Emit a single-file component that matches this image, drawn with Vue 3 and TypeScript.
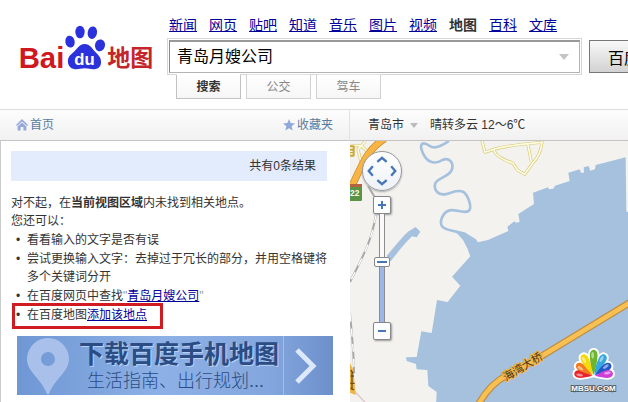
<script setup lang="ts">
import { computed, ref } from 'vue'

interface NavLink {
  label: string
  current?: boolean
}

const links: NavLink[] = [
  { label: '新闻' },
  { label: '网页' },
  { label: '贴吧' },
  { label: '知道' },
  { label: '音乐' },
  { label: '图片' },
  { label: '视频' },
  { label: '地图', current: true },
  { label: '百科' },
  { label: '文库' },
]

const tabs: string[] = ['搜索', '公交', '驾车']
const activeTab = ref('搜索')
const keyword = ref('青岛月嫂公司')
const zoom = ref(56)

const trackStyle = computed(() => ({ '--level': `${zoom.value}%` }))

function petalPath(length: number): string {
  return `M0 -4 C-9 -26 -13 ${20 - length} -11 ${12 - length} C-8 ${-2 - length} 8 ${-2 - length} 11 ${12 - length} C13 ${20 - length} 9 -26 0 -4Z`
}

const petals = [
  { angle: -82, length: 60, color: '#e8232b' },
  { angle: -56, length: 64, color: '#f47a20' },
  { angle: -28, length: 74, color: '#f5d90a' },
  { angle: 0, length: 80, color: '#6db52c' },
  { angle: 28, length: 74, color: '#35a8e0' },
  { angle: 56, length: 64, color: '#2458c8' },
  { angle: 82, length: 60, color: '#cf3fd8' },
].map((petal) => ({ ...petal, path: petalPath(petal.length) }))

function changeZoom(step: number) {
  zoom.value = Math.min(100, Math.max(0, zoom.value + step))
}
</script>

<template>
  <div class="page">
    <header class="header">
      <a class="logo" href="#" aria-label="Baidu 地图">
        <svg viewBox="57 72 405 138" width="135" height="46">
          <text class="logo-red" x="56" y="203" font-size="88">Bai</text>
          <g fill="#2b32dc">
            <ellipse cx="210" cy="125" rx="14" ry="18" transform="rotate(-12 210 125)" />
            <ellipse cx="240" cy="96" rx="14" ry="19" />
            <ellipse cx="277" cy="98" rx="14" ry="19" transform="rotate(12 277 98)" />
            <ellipse cx="300" cy="136" rx="15" ry="18" transform="rotate(14 300 136)" />
            <path d="M254 132 C238 132 232 146 222 155 C210 165 202 172 204 188 C207 206 224 210 240 206 C250 204 260 204 268 206 C286 210 302 206 303 188 C304 172 294 164 284 154 C275 144 270 132 254 132Z" />
          </g>
          <text class="logo-du" x="223" y="194" font-size="50">du</text>
          <text class="logo-map" x="322" y="198" font-size="69">地图</text>
        </svg>
      </a>
      <div class="search">
        <nav class="links">
          <template v-for="link in links" :key="link.label">
            <strong v-if="link.current">{{ link.label }}</strong>
            <a v-else href="#">{{ link.label }}</a>
          </template>
        </nav>
        <form class="search-row" @submit.prevent>
          <div class="box">
            <input v-model="keyword" type="text" aria-label="搜索" />
            <span class="caret"></span>
          </div>
          <button class="submit" type="submit">百度</button>
        </form>
        <div class="tabs">
          <button
            v-for="tab in tabs"
            :key="tab"
            type="button"
            :class="['tab', { active: tab === activeTab }]"
            @click="activeTab = tab"
          >{{ tab }}</button>
        </div>
      </div>
    </header>

    <div class="columns">
      <aside class="side">
        <div class="bar side-bar">
          <a href="#">
            <svg width="12" height="12" viewBox="0 0 12 12" fill="#94a9da">
              <path d="M6 0 L12 6 L11 7 L6 2.4 L1 7 L0 6Z" />
              <path d="M6 3.4 L10.4 7.4 V11.6 H7.4 V8 H4.6 V11.6 H1.6 V7.4Z" />
            </svg>
            首页
          </a>
          <a href="#">
            <svg width="12" height="12" viewBox="0 0 12 12" fill="#8fa8dc">
              <path d="M6 0 L7.6 4.1 L12 4.4 L8.6 7.2 L9.7 11.6 L6 9.2 L2.3 11.6 L3.4 7.2 L0 4.4 L4.4 4.1Z" />
            </svg>
            收藏夹
          </a>
        </div>
        <div class="results">
          <div class="count">共有0条结果</div>
          <p>对不起，在<b>当前视图区域</b>内未找到相关地点。</p>
          <p>您还可以：</p>
          <ul>
            <li>看看输入的文字是否有误</li>
            <li>尝试更换输入文字：去掉过于冗长的部分，并用空格键将多个关键词分开</li>
            <li>在百度网页中查找<i>"</i><a href="#">青岛月嫂公司</a><i>"</i></li>
            <li><span class="marked">在百度地图<a href="#">添加该地点</a></span></li>
          </ul>
          <a class="banner" href="#">
            <svg class="pin" width="42" height="56" viewBox="0 0 42 56">
              <path fill="#a9c1ea" fill-rule="evenodd" d="M21 0 A21 21 0 0 1 42 21 C42 34 28 40 22 56 H20 C14 40 0 34 0 21 A21 21 0 0 1 21 0Z M21 14 A7 7 0 1 0 21 28 A7 7 0 1 0 21 14Z" />
            </svg>
            <span class="copy">
              <span class="title">下载百度手机地图</span>
              <span class="sub">生活指南、出行规划...</span>
            </span>
            <span class="go">
              <svg width="22" height="36" viewBox="0 0 22 36">
                <path d="M2 2 L18 18 L2 34" fill="none" stroke="#dce8fb" stroke-width="5" />
              </svg>
            </span>
          </a>
        </div>
      </aside>

      <main class="main">
        <div class="bar map-bar">
          <button type="button" class="city">青岛市<span class="caret small"></span></button>
          <span>晴转多云 12～6℃</span>
        </div>
        <div class="map">
          <svg class="canvas" viewBox="6 3 834 783" preserveAspectRatio="xMinYMin slice">
            <rect x="0" y="0" width="900" height="900" fill="#f3f2ef" />
            <g fill="#a5c1de">
              <path d="M833 52 L743 75 L741 88 L727 92 L722 78 L707 82 L708 98 L699 98 L695 88 L661 98 L665 123 L621 137 L616 146 L603 148 L600 142 L555 158 L558 192 L511 222 L515 246 L503 248 L499 244 L478 260 L481 273 L420 300 L390 307 L384 298 L350 277 L318 270 L345 300 L358 325 L367 349 L312 410 L337 437 L299 486 L267 480 L251 579 L220 574 L206 651 L174 652 L176 663 L204 672 L206 688 L238 690 L241 738 L266 756 L264 800 H900 V215 H835Z" />
              <path d="M116 348 C140 320 160 293 182 274 L203 261 L217 275 L206 292 L192 289 C170 310 150 336 128 364Z" />
            </g>
            <path d="M300 5 C280 18 265 26 252 21 C238 16 236 9 226 10 C212 13 223 40 232 52 C248 72 268 70 283 60 C305 50 320 70 310 92 C300 112 270 112 262 130 C255 150 272 165 290 163 C315 158 325 148 345 155 C362 166 373 205 362 213 C345 222 325 207 305 211 C285 216 272 245 283 260 C295 274 325 270 350 285" fill="none" stroke="#a5c1de" stroke-width="8" stroke-linecap="round" />

            <g fill="none" stroke-linejoin="round">
              <g stroke="#d5c978" stroke-width="9">
                <path d="M401 0 L411 37 L440 27 C490 14 540 11 583 7 M583 0 C580 30 572 52 555 68 L530 103 L508 90 L495 70 C470 60 440 48 438 28 M539 10 L550 66" />
                <path d="M8 17 H40 L60 36 M52 4 L30 28 L40 70" />
              </g>
              <g stroke="#fffce0" stroke-width="5">
                <path d="M401 0 L411 37 L440 27 C490 14 540 11 583 7 M583 0 C580 30 572 52 555 68 L530 103 L508 90 L495 70 C470 60 440 48 438 28 M539 10 L550 66" />
                <path d="M8 17 H40 L60 36 M52 4 L30 28 L40 70" />
              </g>
              <path d="M110 -4 C60 28 48 60 10 142" stroke="#d08e35" stroke-width="22" />
              <path d="M110 -4 C60 28 48 60 10 142" stroke="#f9b544" stroke-width="17" />
              <path d="M60 138 L84 178 M84 225 C70 300 55 330 6 426 M6 520 C12 590 18 640 18 700" stroke="#a8a8a8" stroke-width="6" />
              <path d="M84 225 C70 300 55 330 6 426 M6 520 C12 590 18 640 18 700" stroke="#ffffff" stroke-width="4" stroke-dasharray="24 22" />
              <path d="M390 795 C418 746 445 722 475 707 L590 643 L850 485" stroke="#bc8c42" stroke-width="21" />
              <path d="M390 795 C418 746 445 722 475 707 L590 643 L850 485" stroke="#f8c052" stroke-width="14" />
              <path d="M18 752 L54 790" stroke="#dfc5cd" stroke-width="4" />
            </g>
            <rect x="0" y="16" width="20" height="34" rx="4" fill="#c9a73c" />
            <path d="M6 24 H14 M6 34 H14 M6 42 H14" stroke="#fff8dc" stroke-width="4" />
            <rect x="0" y="132" width="42" height="51" rx="4" fill="#579545" />
            <rect x="0" y="132" width="42" height="9" fill="#b4633c" />
            <text class="road-no" x="6" y="169">22</text>
            <path d="M6 668 L16 690 L23 765 L6 758Z" fill="#efb746" />
            <path d="M8 690 L16 700 M8 708 H18 M12 696 V750 M7 730 H20 M8 744 L18 750" fill="none" stroke="#6e501e" stroke-width="4" />
            <text class="bridge" transform="translate(474 724) rotate(-31)">海湾大桥</text>

            <g transform="translate(737 708)">
              <g fill="#fff" stroke="#fff" stroke-width="11" stroke-linejoin="round">
                <path v-for="p in petals" :key="p.angle" :transform="`rotate(${p.angle})`" :d="p.path" />
              </g>
              <g v-for="p in petals" :key="p.color" :transform="`rotate(${p.angle})`">
                <path :d="p.path" :fill="p.color" />
                <ellipse cx="-3" :cy="18 - p.length" rx="4" ry="10" fill="#fff" opacity=".5" />
              </g>
            </g>
            <text class="mark" x="670" y="753">MBSU.COM</text>
          </svg>

          <div class="pan">
            <button type="button" class="up" aria-label="上"><svg viewBox="0 0 10 6"><path d="M1 5 L5 1.5 L9 5" /></svg></button>
            <button type="button" class="left" aria-label="左"><svg viewBox="0 0 10 6"><path d="M1 5 L5 1.5 L9 5" /></svg></button>
            <button type="button" class="right" aria-label="右"><svg viewBox="0 0 10 6"><path d="M1 5 L5 1.5 L9 5" /></svg></button>
            <button type="button" class="down" aria-label="下"><svg viewBox="0 0 10 6"><path d="M1 5 L5 1.5 L9 5" /></svg></button>
          </div>
          <div class="zoom">
            <button type="button" aria-label="放大" @click="changeZoom(5)">
              <svg width="8" height="8" viewBox="0 0 8 8"><path d="M0 4 H8 M4 0 V8" /></svg>
            </button>
            <input v-model.number="zoom" type="range" min="0" max="100" aria-label="缩放" :style="trackStyle" />
            <button type="button" aria-label="缩小" @click="changeZoom(-5)">
              <svg width="8" height="8" viewBox="0 0 8 8"><path d="M0 4 H8" /></svg>
            </button>
          </div>
        </div>
      </main>
    </div>
  </div>
</template>

<style>
body {
  margin: 0;
  background: #fff;
}
</style>

<style scoped>
.page {
  display: flex;
  flex-direction: column;
  min-height: 100vh;
  overflow: hidden;
  font: 12px/18px "Liberation Sans", "Noto Sans CJK SC", sans-serif;
  color: #333;
}
button,
input {
  box-sizing: border-box;
  margin: 0;
  padding: 0;
  font-family: inherit;
}
.header {
  display: flex;
  box-sizing: border-box;
  height: 109px;
  padding: 15px 0 0 19px;
}
.logo {
  flex: none;
  width: 148px;
  padding-top: 9px;
}
.logo svg,
.canvas,
.pan svg,
.zoom svg,
.bar svg,
.banner svg {
  display: block;
}
.logo svg {
  overflow: visible;
}
.logo text {
  font-family: "Liberation Sans", sans-serif;
  font-weight: bold;
}
.logo-red {
  fill: #d01820;
}
.logo-du {
  fill: #fff;
}
.logo .logo-map {
  fill: #c4252b;
  font-family: "Noto Sans CJK SC", sans-serif;
}
.search {
  flex: 1;
  min-width: 0;
}
.links {
  display: flex;
  gap: 12px;
  padding-left: 2px;
  font-size: 14px;
  line-height: 20px;
}
a {
  color: #00009a;
}
.search-row {
  display: flex;
  align-items: center;
  gap: 9px;
  margin-top: 5px;
}
.box {
  display: flex;
  flex: 1 0 411px;
  max-width: 411px;
  align-items: center;
  box-sizing: border-box;
  height: 33px;
  margin-left: 2px;
  border: 1px solid #b4b4b4;
  border-top: 2px solid #999;
  border-left-color: #888;
  outline: 1px solid #d6d6d6;
  outline-offset: 1px;
}
.box input {
  flex: 1;
  min-width: 0;
  height: 26px;
  padding: 0 0 4px 7px;
  border: 0;
  background: none;
  outline: 0;
  font-size: 16px;
  color: #000;
}
.caret {
  width: 0;
  margin-right: 10px;
  border: 5px solid transparent;
  border-top: 6px solid #c4c4c4;
  border-bottom: 0;
}
.submit {
  flex: none;
  height: 33px;
  padding: 0 18px;
  border: 1px solid #777;
  background: linear-gradient(#f8f8f8, #d2d2d2);
  font-size: 16px;
  color: #000;
}
.tabs {
  display: flex;
  gap: 5px;
  padding: 1px 0 0 9px;
}
.tab {
  width: 65px;
  height: 25px;
  padding-bottom: 3px;
  border: 1px solid #d2d2d2;
  border-top-color: #e2e2e2;
  background: linear-gradient(#fff, #f6f6f6);
  font-size: 12px;
  color: #888;
}
.tab.active {
  border-color: #c2c2c2;
  border-top-color: #fff;
  font-weight: bold;
  color: #333;
}
.columns {
  display: grid;
  flex: 1;
  grid-template-columns: 350px 1fr;
}
.side,
.main {
  display: flex;
  flex-direction: column;
}
.bar {
  display: flex;
  align-items: center;
  box-sizing: border-box;
  height: 32px;
  border-top: 1px solid #dcdcdc;
  border-bottom: 1px solid #c4c4c4;
  background: linear-gradient(#fdfdfd, #f1f1f1);
}
.side-bar {
  justify-content: space-between;
  padding: 0 16px;
  border-right: 1px solid #e2e2e2;
}
.side-bar a {
  display: flex;
  align-items: center;
  gap: 2px;
  color: #5a7b9f;
  text-decoration: none;
}
.results {
  flex: 1;
  padding: 10px 16px 7px 10px;
  border-left: 1px solid #ccc;
}
.count {
  margin: 0 7px 13px 0;
  padding: 6px 11px;
  background: #e3ecfc;
  text-align: right;
}
p,
ul {
  margin: 0;
  padding: 0;
}
ul {
  display: grid;
  gap: 1px;
  padding: 1px 4px 0 16px;
  list-style: none;
}
li {
  display: flow-root;
}
li::before {
  content: "•";
  float: left;
  width: 11px;
  margin-left: -11px;
  font-size: 12px;
}
li i {
  font-style: normal;
  color: #999;
}
.marked {
  position: relative;
}
.marked::after {
  position: absolute;
  inset: -5px -16px -7px -15px;
  border: 3px solid #d01c20;
  content: "";
  pointer-events: none;
}
.banner {
  display: flex;
  align-items: center;
  height: 59px;
  margin: 12px 1px 0 6px;
  padding-left: 10px;
  background: linear-gradient(90deg, #6f97d4, #8db1e6 45%, #83a6de 80%, #6d90cb);
  color: #2c4c84;
  text-decoration: none;
}
.copy {
  display: flex;
  flex: 1;
  flex-direction: column;
  padding-left: 10px;
  white-space: nowrap;
}
.title {
  font-size: 25px;
  font-weight: bold;
  line-height: 30px;
  text-shadow: 1px 1px 0 #b8d0f4;
}
.sub {
  padding-left: 8px;
  font-size: 18px;
  font-weight: 300;
  line-height: 24px;
}
.go {
  display: flex;
  align-items: center;
  height: 100%;
  padding: 0 16px 0 11px;
  border-left: 1px solid #a3bde7;
}
.map-bar {
  gap: 12px;
  padding-left: 18px;
}
.city {
  display: flex;
  align-items: center;
  gap: 6px;
  height: 18px;
  border: 0;
  background: none;
  font-size: 12px;
  line-height: 18px;
  color: #333;
}
.caret.small {
  margin: 0;
  border-width: 5px 4px 0;
  border-top-color: #bbb;
}
.map {
  position: relative;
  flex: 1;
  overflow: hidden;
}
.canvas {
  position: absolute;
  inset: 0;
  width: 100%;
  height: 100%;
}
.road-no {
  fill: #fff;
  font: bold 25px "Liberation Sans", sans-serif;
}
.bridge {
  fill: #4d3510;
  stroke: #eeb64e;
  stroke-width: 7px;
  paint-order: stroke;
  font: 33px "Noto Sans CJK SC", sans-serif;
}
.mark {
  fill: #fff;
  stroke: #55606c;
  stroke-width: 6px;
  paint-order: stroke;
  font: bold 24px "Liberation Sans", sans-serif;
}
.pan {
  position: absolute;
  top: 10px;
  left: 12px;
  display: grid;
  grid-template-areas: ". up ." "left . right" ". down .";
  grid-template-columns: 12px 12px 12px;
  grid-template-rows: 12px 12px 12px;
  align-content: center;
  justify-content: center;
  box-sizing: border-box;
  width: 40px;
  height: 40px;
  border: 1px solid #999;
  border-radius: 50%;
  background: linear-gradient(#fff, #edf2f8);
  box-shadow: 0 1px 2px #aaa;
}
.pan button {
  display: grid;
  place-items: center;
  border: 0;
  background: none;
}
.pan svg {
  width: 12px;
  height: 7px;
}
.pan path,
.zoom path {
  fill: none;
  stroke: #4675b8;
  stroke-width: 2;
}
.up {
  grid-area: up;
}
.left {
  grid-area: left;
  transform: rotate(-90deg);
}
.right {
  grid-area: right;
  transform: rotate(90deg);
}
.down {
  grid-area: down;
  transform: rotate(180deg);
}
.zoom {
  position: absolute;
  top: 55px;
  left: 23px;
  display: flex;
  flex-direction: column;
  align-items: center;
}
.zoom button {
  display: grid;
  place-items: center;
  width: 18px;
  height: 18px;
  border: 1px solid #888;
  border-radius: 2px;
  background: #fcfdff;
  box-shadow: 1px 1px 2px #999;
}
.zoom input {
  width: 18px;
  height: 108px;
  appearance: none;
  background: none;
  direction: rtl;
  writing-mode: vertical-lr;
}
.zoom input::-webkit-slider-runnable-track {
  box-sizing: border-box;
  width: 6px;
  height: 108px;
  border: 1px solid #8c8c8c;
  border-width: 0 1px;
  background: linear-gradient(to top, #9db8e8 var(--level), #fafafa var(--level));
}
.zoom input::-webkit-slider-thumb {
  box-sizing: border-box;
  width: 16px;
  height: 10px;
  margin-left: -6px;
  border: 1px solid #888;
  border-radius: 2px;
  appearance: none;
  background: linear-gradient(#4675b8, #4675b8) center / 10px 2px no-repeat #fff;
}
</style>
